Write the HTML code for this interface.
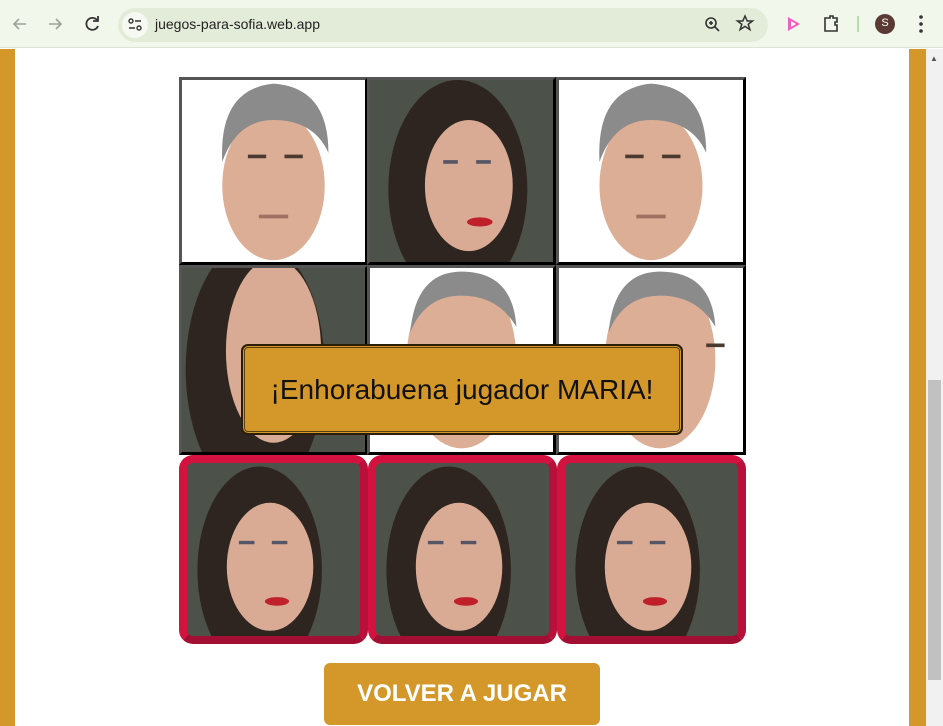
<!DOCTYPE html>
<html><head><meta charset="utf-8"><style>
*{margin:0;padding:0;box-sizing:border-box}
body{width:943px;height:726px;overflow:hidden;background:#fff;font-family:"Liberation Sans",sans-serif;position:relative}
.abs{position:absolute}
.cell{position:absolute;border:3px solid;border-color:#555 #000 #000 #555;overflow:hidden;background:#fff}
.cell svg,.red svg{width:100%;height:100%;display:block}
.red{position:absolute;border:8px solid #d4123f;border-bottom-color:#a30f32;border-right-color:#b8103a;border-radius:14px;overflow:hidden;background:#4c524a}
</style></head><body>
<div class="abs" style="left:0;top:0;width:943px;height:48px;background:#f2f7ec;border-bottom:1px solid #dde3d6"></div>
<div class="abs" style="left:118px;top:8px;width:650px;height:34px;background:#e3ecd9;border-radius:17px"></div>
<div class="abs" style="left:122px;top:12px;width:26px;height:26px;background:#f6f9f2;border-radius:13px"></div>
<svg class="abs" style="left:0;top:0" width="943" height="48">
<g stroke="#9aa39a" stroke-width="1.6" fill="none"><path d="M26 24H14M19 19l-5 5 5 5"/><path d="M49 24h12M56 19l5 5-5 5"/></g>
<path d="M97 20a6 6 0 1 0 1 6" stroke="#333" stroke-width="1.8" fill="none"/><path d="M98 16v5h-5" stroke="#333" stroke-width="1.8" fill="none"/>
<g stroke="#333" stroke-width="1.4" fill="none"><circle cx="131" cy="21" r="2"/><path d="M135 21h6M129 28h6"/><circle cx="139" cy="28" r="2"/></g>
<g stroke="#333" stroke-width="1.6" fill="none"><circle cx="711" cy="23" r="5"/><path d="M715 27l4 4M709 23h4M711 21v4"/></g>
<path d="M745 16l2.2 5h5.3l-4.3 3.3 1.7 5.3-4.9-3.2-4.9 3.2 1.7-5.3-4.3-3.3h5.3z" stroke="#333" stroke-width="1.5" fill="none"/>
<path d="M788 17l12 7-12 7z" fill="#f05fc0"/><path d="M791 21l5 3-5 3z" fill="#fff"/>
<path d="M825 18h5v-2h3v2h4v4h-2v3h2v6h-12z" stroke="#333" stroke-width="1.6" fill="none"/>
<path d="M858 16v16" stroke="#9ed69a" stroke-width="1.5"/>
<circle cx="885" cy="24" r="10" fill="#5a3a33"/>
<g fill="#333"><circle cx="921" cy="17" r="1.8"/><circle cx="921" cy="24" r="1.8"/><circle cx="921" cy="31" r="1.8"/></g>
</svg>
<div class="abs" style="left:155px;top:16px;font-size:14px;color:#222">juegos-para-sofia.web.app</div>
<div class="abs" style="left:879px;top:17px;width:12px;font-size:11px;color:#fff;text-align:center">S</div>
<div class="abs" style="left:0;top:49px;width:15px;height:677px;background:#d4982a"></div>
<div class="abs" style="left:909px;top:49px;width:17px;height:677px;background:#d4982a"></div>
<div class="abs" style="left:926px;top:49px;width:17px;height:677px;background:#f1f1f1"></div>
<div class="abs" style="left:928px;top:380px;width:13px;height:300px;background:#c1c1c1"></div>
<div class="abs" style="left:930px;top:54px;font-size:8px;color:#555">▲</div>

<div class="cell" style="left:179px;top:77px;width:189px;height:188px"><svg viewBox="0 0 100 100" preserveAspectRatio="none"><ellipse cx="50" cy="58" rx="28" ry="41" fill="#dcae96"/><path d="M22 45Q20 5 50 2Q80 4 80 40Q72 22 50 22Q30 22 22 45z" fill="#8b8b8b"/><path d="M36 42h10M56 42h10" stroke="#4a3a30" stroke-width="2"/><path d="M42 75h16" stroke="#a07060" stroke-width="2"/></svg></div>
<div class="cell" style="left:367px;top:77px;width:189px;height:188px"><svg viewBox="0 0 100 100" preserveAspectRatio="none"><rect width="100" height="100" fill="#4c524a"/><ellipse cx="48" cy="60" rx="38" ry="60" fill="#2f2520"/><ellipse cx="54" cy="58" rx="24" ry="36" fill="#d9ab95"/><path d="M40 45h8M58 45h8" stroke="#556" stroke-width="2"/><ellipse cx="60" cy="78" rx="7" ry="2.5" fill="#c0202a"/></svg></div>
<div class="cell" style="left:556px;top:77px;width:190px;height:188px"><svg viewBox="0 0 100 100" preserveAspectRatio="none"><ellipse cx="50" cy="58" rx="28" ry="41" fill="#dcae96"/><path d="M22 45Q20 5 50 2Q80 4 80 40Q72 22 50 22Q30 22 22 45z" fill="#8b8b8b"/><path d="M36 42h10M56 42h10" stroke="#4a3a30" stroke-width="2"/><path d="M42 75h16" stroke="#a07060" stroke-width="2"/></svg></div>
<div class="cell" style="left:179px;top:265px;width:189px;height:190px"><svg viewBox="0 0 100 100" preserveAspectRatio="none"><rect width="100" height="100" fill="#4c524a"/><ellipse cx="40" cy="55" rx="38" ry="70" fill="#2f2520"/><ellipse cx="50" cy="45" rx="26" ry="50" fill="#d9ab95"/></svg></div>
<div class="cell" style="left:367px;top:265px;width:189px;height:190px"><svg viewBox="0 0 100 100" preserveAspectRatio="none"><ellipse cx="50" cy="50" rx="30" ry="48" fill="#dcae96"/><path d="M22 35Q25 2 50 2Q78 2 80 32Q70 15 50 15Q30 15 22 35z" fill="#8b8b8b"/></svg></div>
<div class="cell" style="left:556px;top:265px;width:190px;height:190px"><svg viewBox="0 0 100 100" preserveAspectRatio="none"><ellipse cx="55" cy="50" rx="30" ry="48" fill="#dcae96"/><path d="M27 35Q30 2 55 2Q83 2 85 32Q75 15 55 15Q35 15 27 35z" fill="#8b8b8b"/><path d="M80 42h10" stroke="#4a3a30" stroke-width="2"/></svg></div>
<div class="red" style="left:179px;top:455px;width:189px;height:189px"><svg viewBox="0 0 100 100" preserveAspectRatio="none"><rect width="100" height="100" fill="#4c524a"/><ellipse cx="42" cy="62" rx="36" ry="60" fill="#2f2520"/><ellipse cx="48" cy="60" rx="25" ry="37" fill="#d9ab95"/><path d="M30 46h9M49 46h9" stroke="#556" stroke-width="2"/><ellipse cx="52" cy="80" rx="7" ry="2.5" fill="#c0202a"/></svg></div>
<div class="red" style="left:368px;top:455px;width:189px;height:189px"><svg viewBox="0 0 100 100" preserveAspectRatio="none"><rect width="100" height="100" fill="#4c524a"/><ellipse cx="42" cy="62" rx="36" ry="60" fill="#2f2520"/><ellipse cx="48" cy="60" rx="25" ry="37" fill="#d9ab95"/><path d="M30 46h9M49 46h9" stroke="#556" stroke-width="2"/><ellipse cx="52" cy="80" rx="7" ry="2.5" fill="#c0202a"/></svg></div>
<div class="red" style="left:557px;top:455px;width:189px;height:189px"><svg viewBox="0 0 100 100" preserveAspectRatio="none"><rect width="100" height="100" fill="#4c524a"/><ellipse cx="42" cy="62" rx="36" ry="60" fill="#2f2520"/><ellipse cx="48" cy="60" rx="25" ry="37" fill="#d9ab95"/><path d="M30 46h9M49 46h9" stroke="#556" stroke-width="2"/><ellipse cx="52" cy="80" rx="7" ry="2.5" fill="#c0202a"/></svg></div>

<div class="abs" style="left:241px;top:344px;width:442px;height:91px;background:#d4982a;border:2px solid #2a1e08;border-radius:7px;box-shadow:inset 0 0 0 1px #d4982a,inset 0 0 0 2px #5a4010;display:flex;align-items:center;justify-content:center;font-size:28px;color:#111">¡Enhorabuena jugador MARIA!</div>
<div class="abs" style="left:324px;top:663px;width:276px;height:62px;background:#d4982a;border-radius:6px;display:flex;align-items:center;justify-content:center;font-size:24px;font-weight:bold;color:#fff">VOLVER A JUGAR</div>
</body></html>
